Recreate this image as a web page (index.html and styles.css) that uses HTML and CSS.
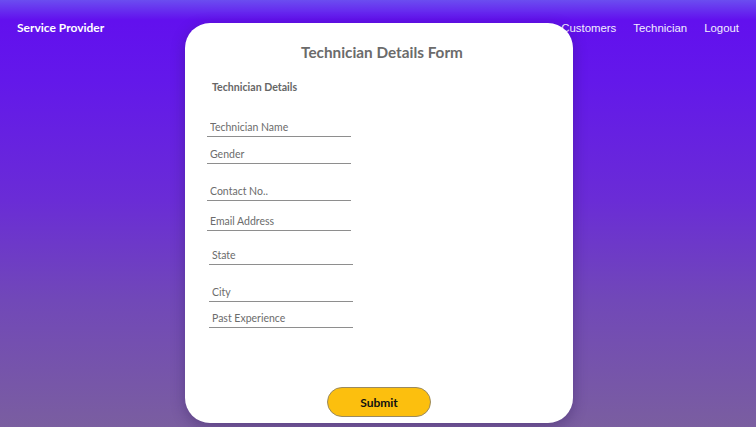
FILE: index.html
```html
<!DOCTYPE html>
<html>
<head>
<meta charset="utf-8">
<link rel="stylesheet" href="styles.css">
</head>
<body>
<header class="topbar">
  <div class="brand">Service Provider</div>
  <nav class="nav">
    <a class="nav-link">Customers</a>
    <a class="nav-link">Technician</a>
    <a class="nav-link">Logout</a>
  </nav>
</header>
<main class="card">
  <h1 class="title">Technician Details Form</h1>
  <h2 class="section">Technician Details</h2>
  <form class="fields">
    <input class="field f1" placeholder="Technician Name">
    <input class="field f2" placeholder="Gender">
    <input class="field f3" placeholder="Contact No..">
    <input class="field f4" placeholder="Email Address">
    <input class="field f5 shift" placeholder="State">
    <input class="field f6 shift" placeholder="City">
    <input class="field f7 shift" placeholder="Past Experience">
  </form>
  <div class="actions">
    <button class="submit" type="button">Submit</button>
  </div>
</main>
</body>
</html>
```
FILE: styles.css
```css
html, body {
  margin: 0;
  padding: 0;
  height: 100%;
}
body {
  width: 756px;
  height: 427px;
  overflow: hidden;
  background: linear-gradient(180deg, #6b4df0 0px, #6210ee 20px, #6318ea 80px, #6a2cd6 200px, #7148b8 300px, #7a5ea0 427px);
  font-family: Lato, "Open Sans", sans-serif;
}
.topbar {
  height: 56px;
  display: flex;
  justify-content: space-between;
  align-items: flex-start;
  padding: 0 17px;
  box-sizing: border-box;
}
.brand {
  color: #fff;
  font-weight: 700;
  font-size: 12px;
  margin-top: 20px;
}
.nav {
  display: flex;
  gap: 17px;
  margin-top: 22px;
}
.nav-link {
  color: #f2eefe;
  font-family: "Liberation Sans", Arial, sans-serif;
  font-size: 11.4px;
}
.card {
  position: relative;
  width: 388px;
  height: 400px;
  margin: -33px 0 0 185px;
  background: #fff;
  border-radius: 25px;
  box-shadow: 0 4px 14px rgba(40, 20, 80, 0.35);
  box-sizing: border-box;
  padding: 18px 22px 0 22px;
  display: flex;
  flex-direction: column;
}
.title {
  margin: 0;
  text-align: center;
  font-size: 15.3px;
  font-weight: 700;
  color: #6b6b6b;
  padding-left: 6px;
  line-height: 22px;
}
.section {
  margin: 17px 0 0 5px;
  font-size: 10.6px;
  font-weight: 700;
  color: #666;
  line-height: 14px;
}
.fields {
  display: flex;
  flex-direction: column;
  align-items: flex-start;
}
.field {
  width: 144px;
  height: 18px;
  box-sizing: border-box;
  border: none;
  border-bottom: 1px solid #8e8e8e;
  padding: 0 0 2px 3px;
  font-family: Lato, "Open Sans", sans-serif;
  font-size: 10.5px;
  color: #555;
  outline: none;
  background: transparent;
}
.field::placeholder {
  color: #6c6c6c;
}
.shift { margin-left: 2px; }
.f1 { margin-top: 25px; }
.f2 { margin-top: 9px; }
.f3 { margin-top: 19px; }
.f4 { margin-top: 12px; }
.f5 { margin-top: 16px; }
.f6 { margin-top: 19px; }
.f7 { margin-top: 8px; }
.actions {
  margin-top: auto;
  display: flex;
  justify-content: center;
  padding: 0 0 6px 0;
}
.submit {
  width: 104px;
  height: 30px;
  border-radius: 15px;
  background: #fcbf0e;
  border: 1px solid #9a8a60;
  font-family: Lato, "Open Sans", sans-serif;
  font-weight: 700;
  font-size: 12px;
  color: #111;
}
```
